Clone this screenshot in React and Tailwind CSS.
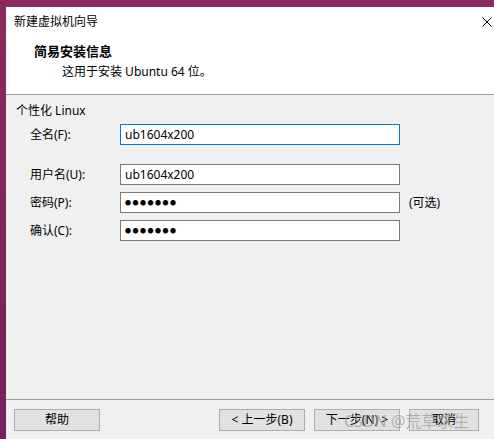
import React from "react";

const font = { fontFamily: '"Noto Sans", "Noto Sans CJK SC", sans-serif' };

const Field = ({ label, value, focused, password, note, className = "" }) => (
  <div className={`flex items-center h-[21px] ${className}`}>
    <div className="w-[90px] pl-[24px] shrink-0 box-content text-[12px] text-black whitespace-nowrap">
      {label}
    </div>
    <div
      className={`w-[280px] h-[21px] bg-white border flex items-center px-[4px] ${
        focused ? "border-[#0078d7]" : "border-[#7a7a7a]"
      }`}
    >
      {password ? (
        <span className="text-[6px] tracking-[1.5px] leading-none text-black">●●●●●●●</span>
      ) : (
        <span className="text-[12px] text-black leading-none">{value}</span>
      )}
    </div>
    {note && <span className="ml-[9px] text-[12px] text-black">{note}</span>}
  </div>
);

const Btn = ({ children, className = "" }) => (
  <button
    className={`h-[22px] bg-[#e1e1e1] border border-[#adadad] text-[12px] text-black flex items-center justify-center ${className}`}
  >
    {children}
  </button>
);

export default function App() {
  return (
    <div
      className="w-[494px] h-[439px] overflow-hidden bg-gradient-to-b from-[#8a2a5c] to-[#76205e] pl-[6px] pt-[7px]"
      style={font}
    >
      <div className="w-[488px] h-[432px] bg-white flex flex-col relative">
        {/* Title bar */}
        <div className="h-[30px] flex items-center justify-between pl-[8px] pr-[2px]">
          <span className="text-[12px] text-black">新建虚拟机向导</span>
          <svg width="10" height="10" viewBox="0 0 10 10" className="text-black">
            <path d="M0.5 0.5 L9.5 9.5 M9.5 0.5 L0.5 9.5" stroke="currentColor" strokeWidth="1" fill="none" />
          </svg>
        </div>

        {/* Header */}
        <div className="h-[57px] pl-[28px] pt-[5px]">
          <div className="text-[13px] font-bold text-black leading-[18px]">简易安装信息</div>
          <div className="pl-[28px] text-[12px] text-black leading-[18px] mt-[3px]">
            这用于安装 Ubuntu 64 位。
          </div>
        </div>
        <div className="h-px bg-[#a0a0a0]" />

        {/* Body */}
        <div className="h-[304px] bg-[#f0f0f0] pt-[8px]">
          <div className="pl-[10px] text-[12px] text-black leading-[16px]">个性化 Linux</div>
          <Field className="mt-[5px]" label="全名(F):" value="ub1604x200" focused />
          <Field className="mt-[19px]" label="用户名(U):" value="ub1604x200" />
          <Field className="mt-[7px]" label="密码(P):" password note="(可选)" />
          <Field className="mt-[7px]" label="确认(C):" password />
        </div>
        <div className="h-px bg-[#a0a0a0]" />

        {/* Footer */}
        <div className="flex-1 bg-[#f0f0f0] flex items-start pt-[9px] pl-[8px]">
          <Btn className="w-[86px]">帮助</Btn>
          <Btn className="w-[86px] ml-[119px]">&lt; 上一步(B)</Btn>
          <Btn className="w-[86px] ml-[9px]">下一步(N) &gt;</Btn>
          <Btn className="w-[70px] ml-[9px]">取消</Btn>
        </div>

        {/* Watermark */}
        <div className="absolute left-[338px] top-[402px] text-[16px] text-[#9a9a9a]/70 whitespace-nowrap pointer-events-none">
          CSDN @荒草求生
        </div>
      </div>
    </div>
  );
}
